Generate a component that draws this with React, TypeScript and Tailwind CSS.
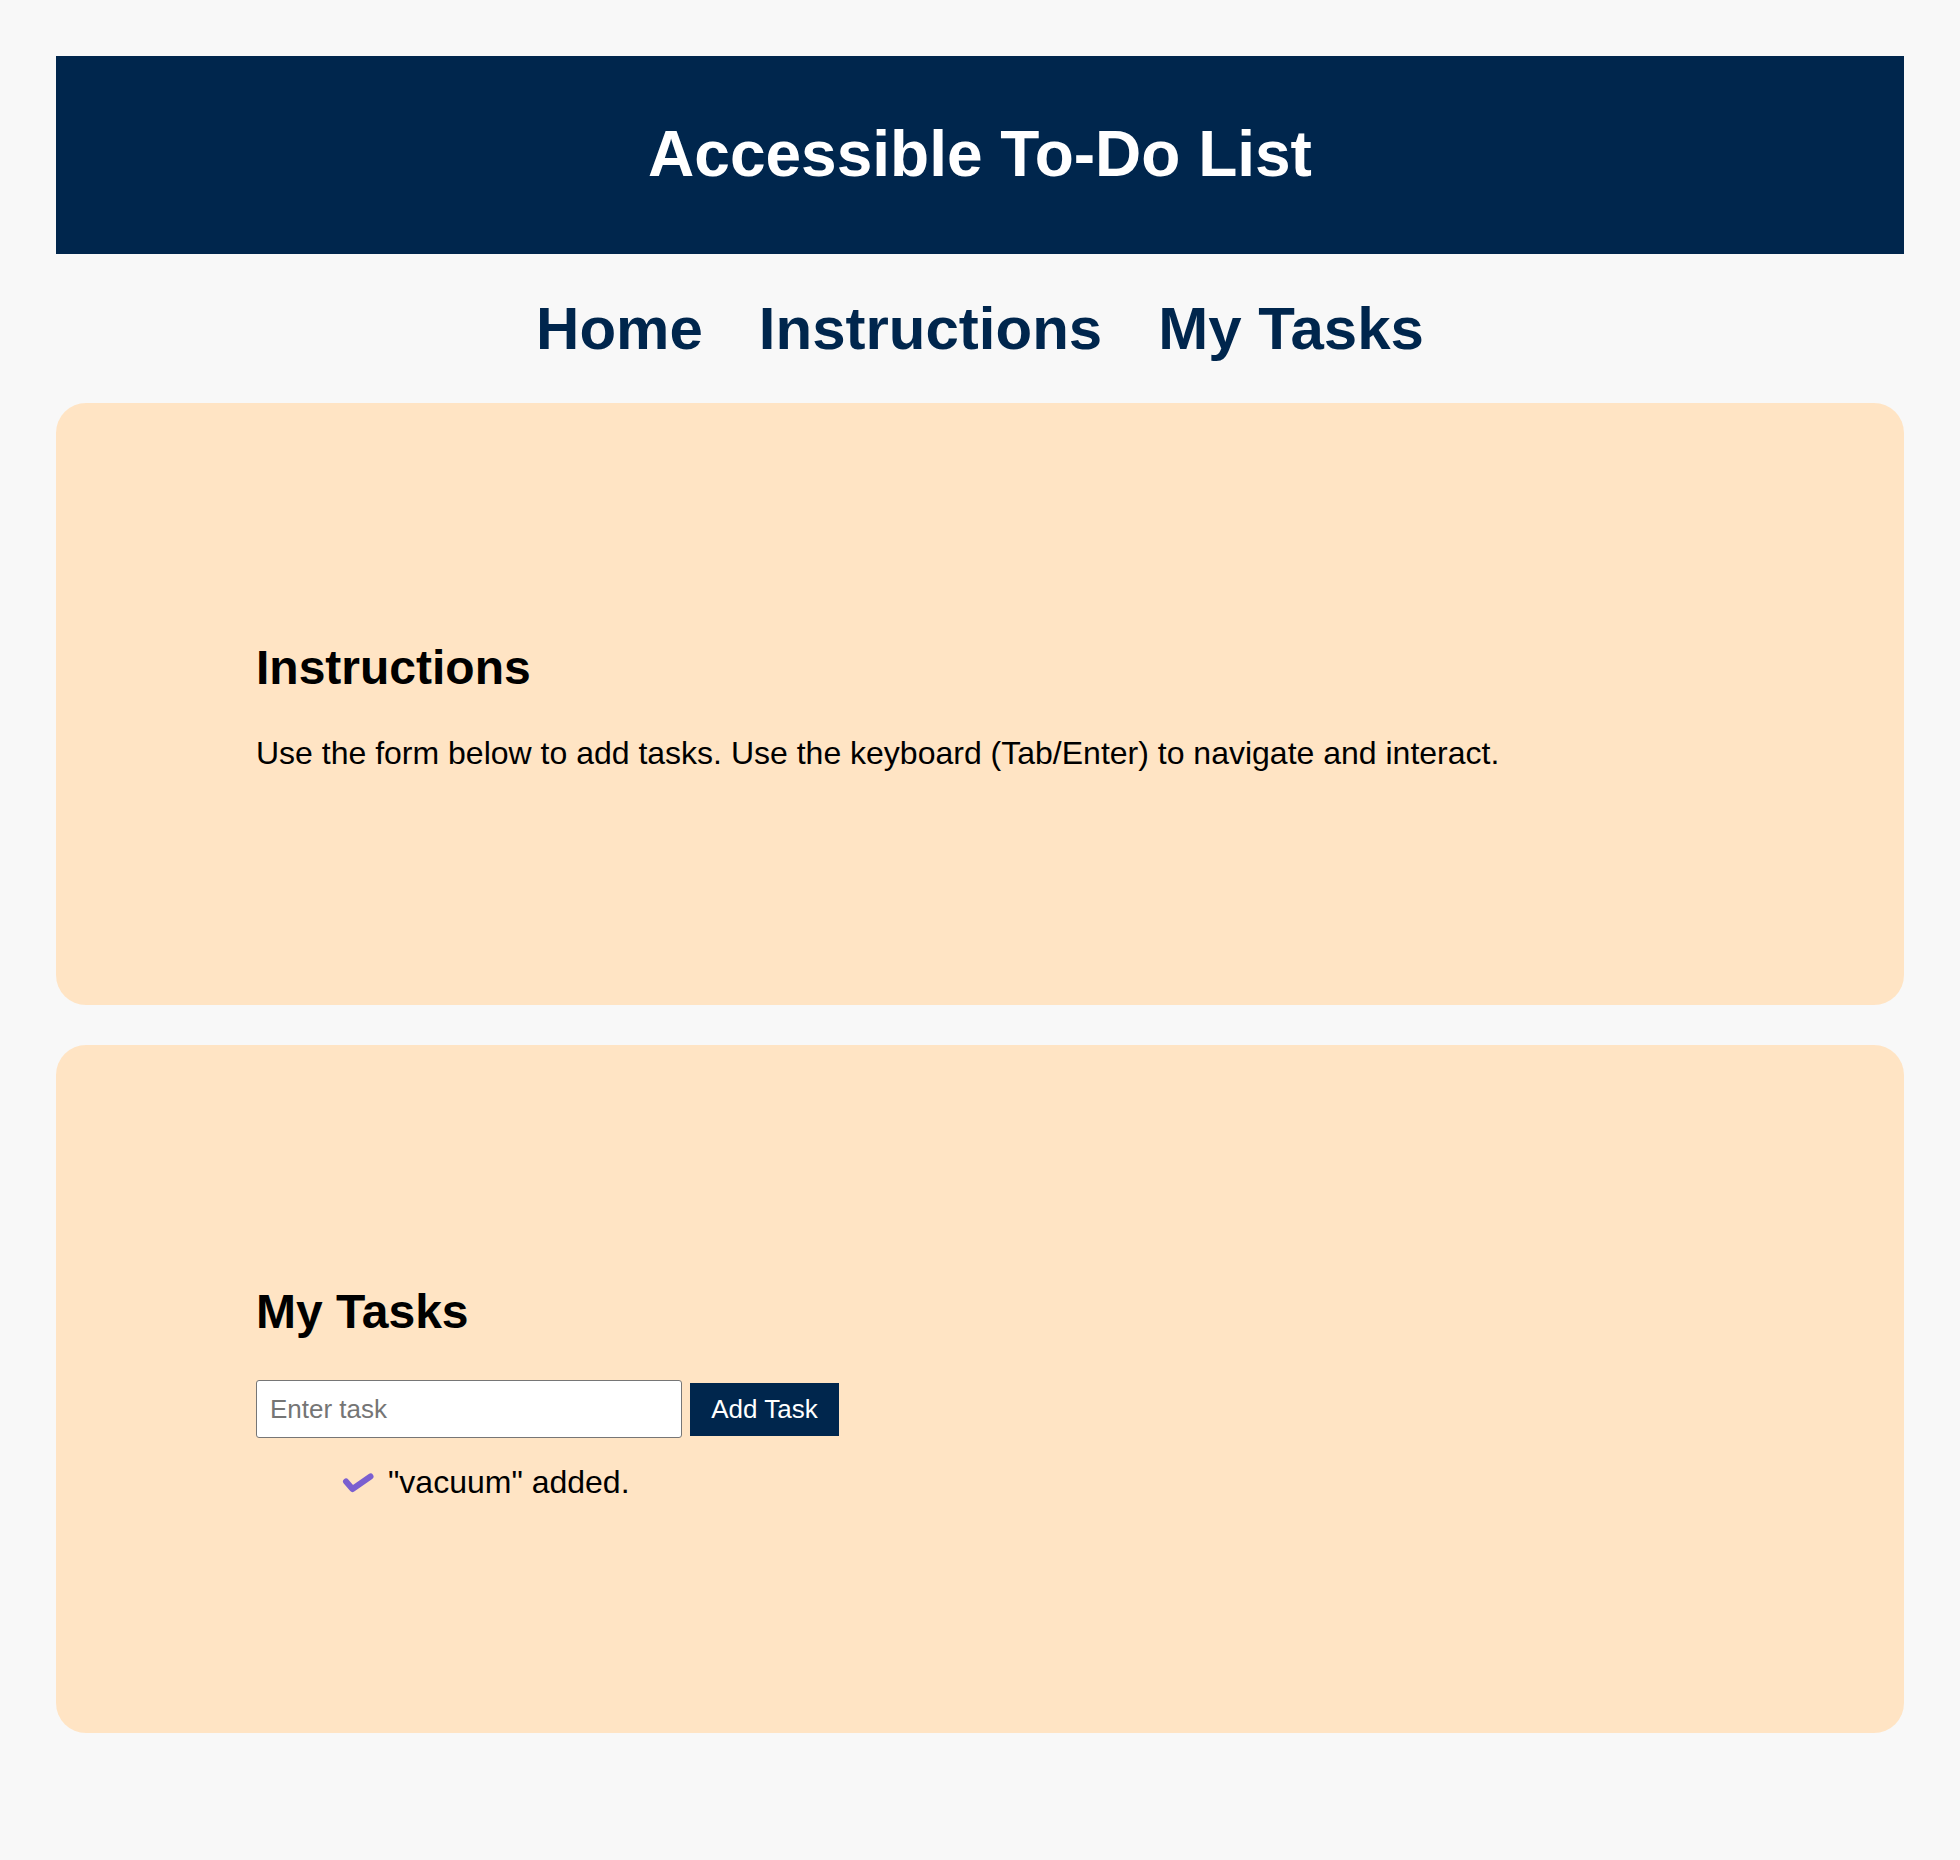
export default function App() {
  return (
    <div className="min-h-[1860px] bg-[#f8f8f8] px-[56px] pt-[56px] pb-[56px] font-['Liberation_Sans',Arial,sans-serif]">
      <header className="h-[198px] bg-[#00264d] flex items-center justify-center">
        <h1 className="text-[64px] font-bold text-white leading-[72px] mb-[2px]">Accessible To-Do List</h1>
      </header>
      <nav className="flex justify-center gap-[56px] py-[40px]">
        <a href="#" className="text-[60px] font-bold text-[#00264d] leading-[69px]">Home</a>
        <a href="#" className="text-[60px] font-bold text-[#00264d] leading-[69px]">Instructions</a>
        <a href="#" className="text-[60px] font-bold text-[#00264d] leading-[69px]">My Tasks</a>
      </nav>
      <main className="flex flex-col gap-[40px]">
        <section className="rounded-[30px] bg-[#ffe4c4] px-[200px] pt-[237px] pb-[233px]">
          <h2 className="text-[48px] font-bold text-black leading-[55px]">Instructions</h2>
          <p className="mt-[40px] text-[32px] text-black leading-[37px]">
            Use the form below to add tasks. Use the keyboard (Tab/Enter) to navigate and interact.
          </p>
        </section>
        <section className="rounded-[30px] bg-[#ffe4c4] px-[200px] pt-[239px] pb-[232px]">
          <h2 className="text-[48px] font-bold text-black leading-[55px]">My Tasks</h2>
          <form className="mt-[41px] flex items-center gap-[8px]" onSubmit={(e) => e.preventDefault()}>
            <input
              type="text"
              placeholder="Enter task"
              aria-label="Enter task"
              className="h-[58px] w-[426px] rounded-[3px] border border-[#767676] bg-white px-[13px] text-[26px] text-black placeholder:text-[#757575] outline-none"
            />
            <button type="submit" className="h-[53px] w-[149px] bg-[#00264d] text-[26px] text-white leading-[30px]">
              Add Task
            </button>
          </form>
          <ul className="mt-[26px] pl-[85px]">
            <li className="flex items-center gap-[13px]">
              <svg width="34" height="22" viewBox="0 0 34 22" fill="none" aria-hidden="true">
                <polyline
                  points="5,9.5 11.5,17 29.5,4.5"
                  stroke="#7b5fd0"
                  strokeWidth="6"
                  strokeLinecap="round"
                  strokeLinejoin="round"
                />
              </svg>
              <span className="text-[32px] text-black leading-[37px]">"vacuum" added.</span>
            </li>
          </ul>
        </section>
      </main>
    </div>
  );
}
